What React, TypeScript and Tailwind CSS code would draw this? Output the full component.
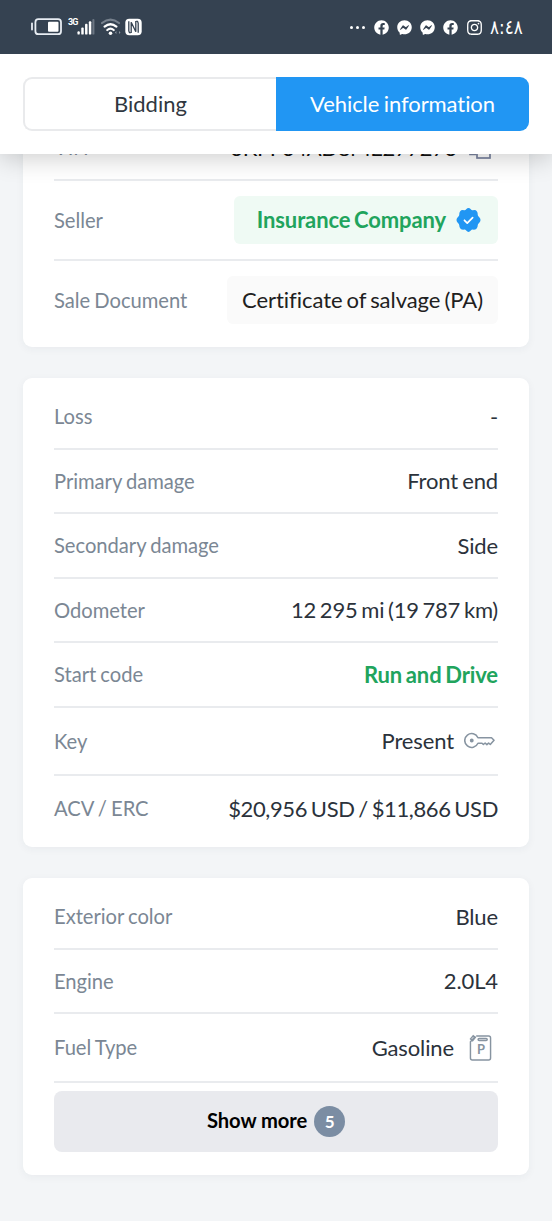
import React, { FC, ReactNode } from "react";
import { FaFacebook, FaFacebookMessenger, FaInstagram } from "react-icons/fa";

type RowProps = {
  label: string;
  children: ReactNode;
  className?: string;
};

const Row: FC<RowProps> = ({ label, children, className = "h-[64.5px] border-b-2" }) => (
  <div className={`flex items-center justify-between border-[#e9ebee] ${className}`}>
    <span className="text-[20.2px] tracking-[-0.03px] text-[#7b8794] [word-spacing:-1px]">{label}</span>
    <div className="flex items-center text-[22px] tracking-[-0.12px] text-[#2b323b]">{children}</div>
  </div>
);

const Card: FC<{ children: ReactNode; className?: string }> = ({ children, className = "" }) => (
  <section
    className={`rounded-[9px] bg-white px-[31px] shadow-[0_2px_8px_rgba(40,50,70,0.05)] ${className}`}
  >
    {children}
  </section>
);

const BatteryIcon = () => (
  <svg width="31" height="18" viewBox="0 0 31 18" fill="none">
    <path d="M1 5.5v6" stroke="#e8edf3" strokeWidth="1.8" strokeLinecap="round" />
    <rect x="4.4" y="1.2" width="25.6" height="15" rx="3" stroke="#e8edf3" strokeWidth="1.8" />
    <rect x="17" y="3.8" width="10.5" height="10" rx="1" fill="#fff" />
  </svg>
);

const SignalIcon = () => (
  <svg width="18" height="18" viewBox="0 0 19 18">
    <rect x="0.5" y="13.5" width="2.4" height="3.5" rx="1" fill="#fff" />
    <rect x="4.5" y="9.5" width="2.6" height="7.5" rx="1" fill="#fff" />
    <rect x="8.5" y="5.5" width="2.6" height="11.5" rx="1" fill="#fff" />
    <rect x="12.5" y="3" width="2.6" height="14" rx="1" fill="#fff" />
    <rect x="16.2" y="0.5" width="2.2" height="16.5" rx="1" fill="#6c7683" />
  </svg>
);

const WifiIcon = () => (
  <svg width="21" height="18" viewBox="0 0 21 18" fill="none" strokeLinecap="round">
    <path d="M1 5Q9.5-1.6 18 5" stroke="#77818d" strokeWidth="2.2" />
    <path d="M3.6 8.6q5.9-4.8 11.8 0" stroke="#fff" strokeWidth="2.3" />
    <path d="M6.3 12q3.2-2.6 6.4 0" stroke="#fff" strokeWidth="2.2" />
    <circle cx="9.5" cy="15.2" r="1.8" fill="#fff" />
    <path d="M15.4 13v3l-1.5-1.5zM18 13v3l1.5-1.5z" fill="#8d96a1" />
  </svg>
);

const NfcIcon = () => (
  <svg width="17" height="18" viewBox="0 0 17 18">
    <rect x="0.3" y="0.8" width="16.4" height="16.4" rx="4" fill="#fff" />
    <path
      d="M3.8 3.2v9.6q0 1.7 1.6 2.4M13.2 14.8V5.2q0-1.7-1.6-2.4M6.2 15V4.2l4.6 9.6V3"
      fill="none"
      stroke="#354251"
      strokeWidth="1.3"
    />
  </svg>
);

const CopyIcon = () => (
  <svg width="23" height="23" viewBox="0 0 23 23" fill="none" stroke="#7a84a0" strokeWidth="1.7">
    <path d="M7.5 17.5H1V1h14v5" />
    <rect x="8" y="8" width="13" height="13" />
  </svg>
);

const VerifiedIcon = () => (
  <svg width="25" height="26" viewBox="0 0 26 26">
    <path
      d="M13 0.5Q14.3 0.5 15.4 1.9Q16.2 3 17.6 2.8Q20.7 2.2 21.8 4.2Q22.7 5.4 22.6 7.5Q22.7 9 24 10Q27 13 24 16Q22.7 17 22.6 18.5Q22.7 20.6 21.5 21.8Q20.2 23.2 17.6 23Q16.2 22.9 15.4 24Q13 27 10.6 24Q9.8 22.9 8.4 23Q5.8 23.2 4.5 21.8Q3.3 20.6 3.4 18.5Q3.3 17 2 16Q-1 13 2 10Q3.3 9 3.4 7.5Q3.3 5.4 4.2 4.2Q5.3 2.2 8.4 2.8Q9.8 3 10.6 1.9Q11.7 0.5 13 0.5Z"
      fill="#2196f3"
    />
    <path
      d="M8.8 13.3l2.9 2.9 5.6-5.7"
      fill="none"
      stroke="#fff"
      strokeWidth="1.8"
      strokeLinecap="round"
      strokeLinejoin="round"
    />
  </svg>
);

const KeyIcon = () => (
  <svg width="31" height="17" viewBox="0 0 32 17" fill="none" stroke="#8794a1" strokeWidth="1.6" strokeLinejoin="round">
    <path d="M14.4 5.7A7.1 7.1 0 1 0 14.4 11.3H18.6L20 12.6l1.8-1.5 1.8 1.7 1.8-1.7 1.7 1.5L31 8.2l-2.6-2.5z" />
    <circle cx="8" cy="8.5" r="1.2" fill="#8794a1" />
  </svg>
);

const FuelIcon = () => (
  <svg width="23" height="28" viewBox="0 0 24 28" fill="none" stroke="#8794a1" strokeWidth="1.5">
    <path d="M7.5 1.5H20.5q2 0 2 2v21q0 2-2 2H3.5q-2 0-2-2V7.5L6.5 2" />
    <path d="M1.6 4.5L4.4 1.2l2.2 1.7-2.8 3.5z" />
    <rect x="9.5" y="4" width="9.5" height="2.2" rx="1.1" />
    <text
      x="12.5"
      y="20.5"
      textAnchor="middle"
      fill="#8794a1"
      stroke="none"
      className="font-['Lato',sans-serif] text-[13.5px] font-bold"
    >
      P
    </text>
  </svg>
);

const StatusBar = () => (
  <div className="flex h-[54px] items-center bg-[#354251] pl-[31px] pr-[30px] text-white">
    <BatteryIcon />
    <span className="-mt-[9px] ml-[6px] w-[9px] font-['Roboto',sans-serif] text-[9px] leading-none font-bold tracking-[-0.8px]">
      3G
    </span>
    <SignalIcon />
    <div className="ml-[6px] flex">
      <WifiIcon />
    </div>
    <div className="ml-[3px] flex">
      <NfcIcon />
    </div>
    <div className="ml-auto flex items-center gap-2">
      <span className="mr-px flex gap-[3px]">
        <i className="size-[3px] rounded-full bg-white" />
        <i className="size-[3px] rounded-full bg-white" />
        <i className="size-[3px] rounded-full bg-white" />
      </span>
      <FaFacebook size={15} />
      <FaFacebookMessenger size={15} />
      <FaFacebookMessenger size={15} />
      <FaFacebook size={15} />
      <FaInstagram size={17} />
      <span className="-ml-px w-[32px] origin-left scale-x-[0.84] font-['DejaVu_Sans',sans-serif] text-[20px] leading-none tracking-[-1.3px] whitespace-nowrap">
        ٨:٤٨
      </span>
    </div>
  </div>
);

const Tabs = () => (
  <div className="h-[100px] bg-white px-[23px] pt-[23px]">
    <div className="flex h-[54px] text-[22px]">
      <button className="w-1/2 rounded-l-[9px] border-2 border-r-0 border-[#e9eaec] pb-0.5 text-[#2f3740]">
        Bidding
      </button>
      <button className="w-1/2 rounded-r-[9px] bg-[#2196f3] pb-0.5 tracking-[-0.08px] text-white [word-spacing:-1px]">
        Vehicle information
      </button>
    </div>
  </div>
);

export default function App() {
  return (
    <div className="h-[1221px] w-[552px] overflow-hidden bg-[#f3f5f7] font-['Lato',sans-serif] [font-variant-ligatures:none] [word-spacing:-1.5px]">
      <header className="relative z-10 shadow-[0_4px_24px_rgba(0,0,0,0.2)]">
        <StatusBar />
        <Tabs />
      </header>

      <main className="-mt-[45px] flex flex-col gap-[31px] px-[23px]">
        <Card className="h-[238px] pt-[7px]">
          <Row label="VIN" className="h-[65px] border-b-2">
            <span className="mr-[12px] tracking-[-0.35px] text-[#111]">3KPF34AD8ME277273</span>
            <span className="mt-0.5 mr-[6px]">
              <CopyIcon />
            </span>
          </Row>
          <Row label="Seller" className="h-20 border-b-2">
            <div className="flex h-12 items-center gap-[10px] rounded-md bg-[#effaf4] pr-[17px] pb-px pl-[23px] font-bold text-[#21a45d]">
              Insurance Company
              <VerifiedIcon />
            </div>
          </Row>
          <Row label="Sale Document" className="h-[78px]">
            <div className="flex h-12 items-center rounded-md bg-[#fafafa] px-[15px] pb-px tracking-[-0.05px] text-[#202020]">
              Certificate of salvage (PA)
            </div>
          </Row>
        </Card>

        <Card className="h-[469px] pt-[7px]">
          <Row label="Loss">-</Row>
          <Row label="Primary damage">Front end</Row>
          <Row label="Secondary damage">Side</Row>
          <Row label="Odometer">
            <span className="tracking-[-0.25px]">12 295 mi (19 787 km)</span>
          </Row>
          <Row label="Start code">
            <span className="font-bold text-[#21a45d]">Run and Drive</span>
          </Row>
          <Row label="Key" className="h-[68.5px] border-b-2">
            <span className="mr-[10px]">Present</span>
            <span className="mr-[3px]">
              <KeyIcon />
            </span>
          </Row>
          <Row label="ACV / ERC" className="h-[64px]">
            <span className="tracking-[-0.38px]">$20,956 USD / $11,866 USD</span>
          </Row>
        </Card>

        <Card className="h-[297px] pt-[7px]">
          <Row label="Exterior color">Blue</Row>
          <Row label="Engine">2.0L4</Row>
          <Row label="Fuel Type" className="h-[69px] border-b-2">
            <span className="mr-[15px]">Gasoline</span>
            <span className="mr-[6px]">
              <FuelIcon />
            </span>
          </Row>
          <button className="mt-2 flex h-[61px] w-full items-center justify-center gap-[7px] rounded-lg bg-[#e9eaee] text-[20.2px] font-bold text-black">
            <span className="pb-0.5 tracking-[-0.08px]">Show more</span>
            <span className="flex size-[31px] items-center justify-center rounded-full bg-[#7b8da3] text-[17px] text-white">
              5
            </span>
          </button>
        </Card>
      </main>
    </div>
  );
}
